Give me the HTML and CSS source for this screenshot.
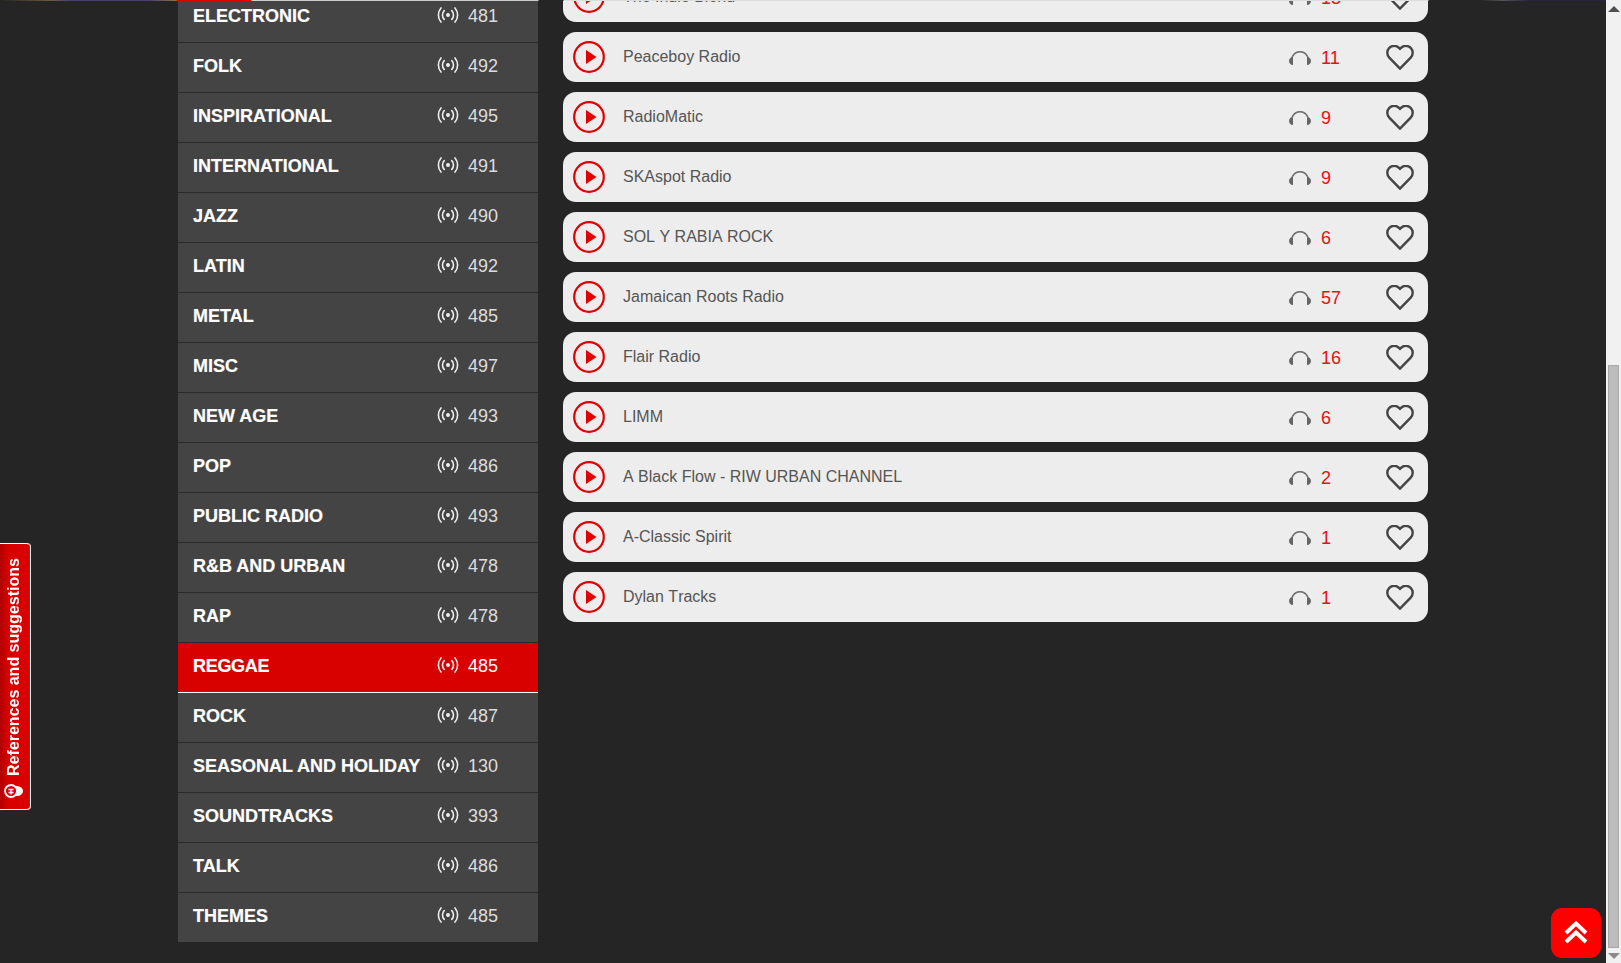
FILE: index.html
```html
<!DOCTYPE html>
<html lang="en">
	<head>
		<title>Radio genres</title>
		<meta charset="utf-8" />
		<link rel="stylesheet" href="styles.css">
	</head>
	<body>
		<svg class="sprites" width="0" height="0">
			<symbol id="i-cast" viewBox="0 0 22 16">
				<circle cx="11" cy="8" r="2" fill="currentColor"/>
				<path d="M7.2 3.6a6.5 6.5 0 0 0 0 8.8M14.8 3.6a6.5 6.5 0 0 1 0 8.8M4 .9a11 11 0 0 0 0 14.2M18 .9a11 11 0 0 1 0 14.2" fill="none" stroke="currentColor" stroke-width="1.6" stroke-linecap="round"/>
			</symbol>
			<symbol id="i-play" viewBox="0 0 32 32">
				<circle cx="16" cy="16" r="14.8" fill="none" stroke="#e00000" stroke-width="2.2"/>
				<path d="M13 9v14l10.500-7z" fill="#e00000"/>
			</symbol>
			<symbol id="i-phones" viewBox="0 0 22 14">
				<path d="M3 8.500V8a8 7.300 0 0 1 16 0v.5" fill="none" stroke="#707070" stroke-width="1.600"/>
				<path d="M4 6v8C1.500 14 0 12.200 0 10s1.500-4 4-4zM18 6v8c2.500 0 4-1.800 4-4s-1.500-4-4-4z" fill="#666"/>
			</symbol>
			<symbol id="i-heart" viewBox="0 0 28 25">
				<path d="M14 23.600 3.300 12.700a7 7 0 0 1 0-9.800 6.800 6.800 0 0 1 9.700 0l1 1 1-1a6.800 6.800 0 0 1 9.700 0 7 7 0 0 1 0 9.800z" fill="none" stroke="#444" stroke-width="2.400"/>
			</symbol>
		</svg>

		<div class="topline"></div>

		<div class="window">
			<div class="page">
				<div class="columns">
					<ul class="genres">
						<li class="genre"><span class="genre-name">ELECTRONIC</span><svg class="cast"><use href="#i-cast"/></svg><span class="genre-count">481</span></li>
						<li class="genre"><span class="genre-name">FOLK</span><svg class="cast"><use href="#i-cast"/></svg><span class="genre-count">492</span></li>
						<li class="genre"><span class="genre-name">INSPIRATIONAL</span><svg class="cast"><use href="#i-cast"/></svg><span class="genre-count">495</span></li>
						<li class="genre"><span class="genre-name">INTERNATIONAL</span><svg class="cast"><use href="#i-cast"/></svg><span class="genre-count">491</span></li>
						<li class="genre"><span class="genre-name">JAZZ</span><svg class="cast"><use href="#i-cast"/></svg><span class="genre-count">490</span></li>
						<li class="genre"><span class="genre-name">LATIN</span><svg class="cast"><use href="#i-cast"/></svg><span class="genre-count">492</span></li>
						<li class="genre"><span class="genre-name">METAL</span><svg class="cast"><use href="#i-cast"/></svg><span class="genre-count">485</span></li>
						<li class="genre"><span class="genre-name">MISC</span><svg class="cast"><use href="#i-cast"/></svg><span class="genre-count">497</span></li>
						<li class="genre"><span class="genre-name">NEW AGE</span><svg class="cast"><use href="#i-cast"/></svg><span class="genre-count">493</span></li>
						<li class="genre"><span class="genre-name">POP</span><svg class="cast"><use href="#i-cast"/></svg><span class="genre-count">486</span></li>
						<li class="genre"><span class="genre-name">PUBLIC RADIO</span><svg class="cast"><use href="#i-cast"/></svg><span class="genre-count">493</span></li>
						<li class="genre"><span class="genre-name">R&amp;B AND URBAN</span><svg class="cast"><use href="#i-cast"/></svg><span class="genre-count">478</span></li>
						<li class="genre"><span class="genre-name">RAP</span><svg class="cast"><use href="#i-cast"/></svg><span class="genre-count">478</span></li>
						<li class="genre active"><span class="genre-name">REGGAE</span><svg class="cast"><use href="#i-cast"/></svg><span class="genre-count">485</span></li>
						<li class="genre"><span class="genre-name">ROCK</span><svg class="cast"><use href="#i-cast"/></svg><span class="genre-count">487</span></li>
						<li class="genre"><span class="genre-name">SEASONAL AND HOLIDAY</span><svg class="cast"><use href="#i-cast"/></svg><span class="genre-count">130</span></li>
						<li class="genre"><span class="genre-name">SOUNDTRACKS</span><svg class="cast"><use href="#i-cast"/></svg><span class="genre-count">393</span></li>
						<li class="genre"><span class="genre-name">TALK</span><svg class="cast"><use href="#i-cast"/></svg><span class="genre-count">486</span></li>
						<li class="genre last"><span class="genre-name">THEMES</span><svg class="cast"><use href="#i-cast"/></svg><span class="genre-count">485</span></li>
					</ul>

					<ul class="stations">
						<li class="station"><svg class="play"><use href="#i-play"/></svg><span class="station-name">The Indie Blend</span><svg class="phones"><use href="#i-phones"/></svg><span class="listeners">13</span><svg class="heart"><use href="#i-heart"/></svg></li>
						<li class="station"><svg class="play"><use href="#i-play"/></svg><span class="station-name">Peaceboy Radio</span><svg class="phones"><use href="#i-phones"/></svg><span class="listeners">11</span><svg class="heart"><use href="#i-heart"/></svg></li>
						<li class="station"><svg class="play"><use href="#i-play"/></svg><span class="station-name">RadioMatic</span><svg class="phones"><use href="#i-phones"/></svg><span class="listeners">9</span><svg class="heart"><use href="#i-heart"/></svg></li>
						<li class="station"><svg class="play"><use href="#i-play"/></svg><span class="station-name">SKAspot Radio</span><svg class="phones"><use href="#i-phones"/></svg><span class="listeners">9</span><svg class="heart"><use href="#i-heart"/></svg></li>
						<li class="station"><svg class="play"><use href="#i-play"/></svg><span class="station-name">SOL Y RABIA ROCK</span><svg class="phones"><use href="#i-phones"/></svg><span class="listeners">6</span><svg class="heart"><use href="#i-heart"/></svg></li>
						<li class="station"><svg class="play"><use href="#i-play"/></svg><span class="station-name">Jamaican Roots Radio</span><svg class="phones"><use href="#i-phones"/></svg><span class="listeners">57</span><svg class="heart"><use href="#i-heart"/></svg></li>
						<li class="station"><svg class="play"><use href="#i-play"/></svg><span class="station-name">Flair Radio</span><svg class="phones"><use href="#i-phones"/></svg><span class="listeners">16</span><svg class="heart"><use href="#i-heart"/></svg></li>
						<li class="station"><svg class="play"><use href="#i-play"/></svg><span class="station-name">LIMM</span><svg class="phones"><use href="#i-phones"/></svg><span class="listeners">6</span><svg class="heart"><use href="#i-heart"/></svg></li>
						<li class="station"><svg class="play"><use href="#i-play"/></svg><span class="station-name">A Black Flow - RIW URBAN CHANNEL</span><svg class="phones"><use href="#i-phones"/></svg><span class="listeners">2</span><svg class="heart"><use href="#i-heart"/></svg></li>
						<li class="station"><svg class="play"><use href="#i-play"/></svg><span class="station-name">A-Classic Spirit</span><svg class="phones"><use href="#i-phones"/></svg><span class="listeners">1</span><svg class="heart"><use href="#i-heart"/></svg></li>
						<li class="station"><svg class="play"><use href="#i-play"/></svg><span class="station-name">Dylan Tracks</span><svg class="phones"><use href="#i-phones"/></svg><span class="listeners">1</span><svg class="heart"><use href="#i-heart"/></svg></li>
					</ul>
				</div>
			</div>

			<div class="scrollbar">
				<div class="arrow-up"></div>
				<div class="thumb"></div>
				<div class="arrow-down"></div>
			</div>
		</div>

		<a class="feedback">
			<svg class="feedback-icon" viewBox="0 0 19 14">
				<ellipse cx="13" cy="7" rx="6" ry="5" fill="#fff"/>
				<circle cx="7" cy="7" r="6" fill="#d90000" stroke="#fff" stroke-width="1.800"/>
				<path d="M4.500 5.500h5M4.500 8.500h5M7 5.500v5" stroke="#fff" stroke-width="1.400" fill="none"/>
			</svg>
			<span>References and suggestions</span>
		</a>

		<a class="to-top">
			<svg viewBox="0 0 24 24" width="24" height="24">
				<path d="M2 12 12 2.500 22 12M2 21 12 11.500 22 21" fill="none" stroke="#fff" stroke-width="4"/>
			</svg>
		</a>
	</body>
</html>
```

FILE: styles.css
```css
html, body {
	height: 100%;
}
body {
	margin: 0;
	overflow: hidden;
	background: #252525;
	font-family: "Liberation Sans", Arial, sans-serif;
}
ul {
	margin: 0;
	padding: 0;
	list-style: none;
}
.sprites {
	position: absolute;
}

/* bottom edge of the page header, scrolled almost out of view */
.topline {
	position: absolute;
	top: 0;
	left: 0;
	right: 15px;
	height: 1px;
	z-index: 5;
	background: linear-gradient(to right,
		#252525 0, #6b5a3a 50px, #4a4070 70px, #4a4070 150px, #8a7040 176px,
		#e00000 178px, #e00000 251px, #cccccc 252px, #cccccc 538px,
		#252525 539px, #252525 563px, #dddddd 564px, #dddddd 1428px,
		#252525 1429px, #252525 1480px, #55555a 1503px, #252540 1530px, #252540 100%);
}

.window {
	display: flex;
	height: 100%;
}
.page {
	flex: 1;
	min-width: 0;
	overflow: hidden;
}
.columns {
	display: flex;
	align-items: flex-start;
	gap: 25px;
	padding-left: 178px;
	margin-top: -28px;
}

/* genre list */
.genres {
	width: 360px;
	margin-top: 21px;
	flex-shrink: 0;
}
.genre {
	display: flex;
	align-items: center;
	box-sizing: border-box;
	height: 50px;
	padding: 0 0 2px 15px;
	background: #444444;
	border-bottom: 1px solid #2b2b2b;
	color: #ffffff;
}
.genre.active {
	background: #d90000;
	border-bottom-color: #ffffff;
}
.genre.last {
	height: 49px;
	border-bottom: 0;
}
.genre-name {
	flex: 1;
	font-size: 18px;
	font-weight: bold;
	white-space: nowrap;
	-webkit-text-stroke: 0.2px #ffffff;
}
.active .genre-name {
	letter-spacing: -0.3px;
}
.cast {
	width: 22px;
	height: 16px;
	margin: -4px 9px 0 0;
	color: #eeeeee;
}
.genre-count {
	width: 70px;
	font-size: 18px;
	color: #dddddd;
}
.active .genre-count {
	color: #ffffff;
}

/* station cards */
.stations {
	display: flex;
	flex-direction: column;
	gap: 10px;
	width: 865px;
}
.station {
	display: flex;
	align-items: center;
	height: 50px;
	padding-left: 10px;
	background: #ededed;
	border-radius: 13px;
}
.play {
	width: 32px;
	height: 32px;
	flex-shrink: 0;
}
.station-name {
	flex: 1;
	margin-left: 18px;
	font-size: 16px;
	font-kerning: none;
	color: #555555;
}
.phones {
	width: 22px;
	height: 14px;
	margin-top: 1px;
	flex-shrink: 0;
}
.listeners {
	width: 75px;
	padding: 2px 0 0 10px;
	box-sizing: border-box;
	font-size: 18px;
	color: #e81010;
}
.heart {
	width: 28px;
	height: 25px;
	margin: 1px 14px 0 0;
	flex-shrink: 0;
}

/* fake browser scrollbar */
.scrollbar {
	display: flex;
	flex-direction: column;
	align-items: center;
	width: 15px;
	background: #f1f1f1;
}
.arrow-up {
	margin-top: 6px;
	border: 6px solid transparent;
	border-top: 0;
	border-bottom-color: #505050;
}
.thumb {
	box-sizing: border-box;
	width: 11px;
	height: 583px;
	margin-top: 353px;
	background: #bcbcbc;
	border: 1px solid #a8a8a8;
}
.arrow-down {
	margin-top: 5px;
	border: 6px solid transparent;
	border-bottom: 0;
	border-top-color: #8a8a8a;
}

/* floating items */
.feedback {
	position: fixed;
	left: 0;
	top: 543px;
	display: flex;
	align-items: center;
	gap: 8px;
	box-sizing: border-box;
	width: 30px;
	height: 267px;
	padding: 11px 0 0 2px;
	writing-mode: vertical-rl;
	transform: rotate(180deg);
	background: linear-gradient(to left, #b00000, #d90000 8px);
	border: 1px solid #ffffff;
	border-left: 0;
	border-right-width: 0;
	border-radius: 4px 0 0 4px;
	box-shadow: -1px 0 0 #ffffff;
	color: #ffffff;
	font-size: 16px;
	font-weight: bold;
	white-space: nowrap;
}
.feedback-icon {
	width: 19px;
	height: 14px;
	transform: rotate(180deg);
}
.to-top {
	position: fixed;
	left: 1551px;
	top: 908px;
	display: flex;
	align-items: center;
	justify-content: center;
	width: 50px;
	height: 50px;
	background: #ff0000;
	border-radius: 11px;
}
```
